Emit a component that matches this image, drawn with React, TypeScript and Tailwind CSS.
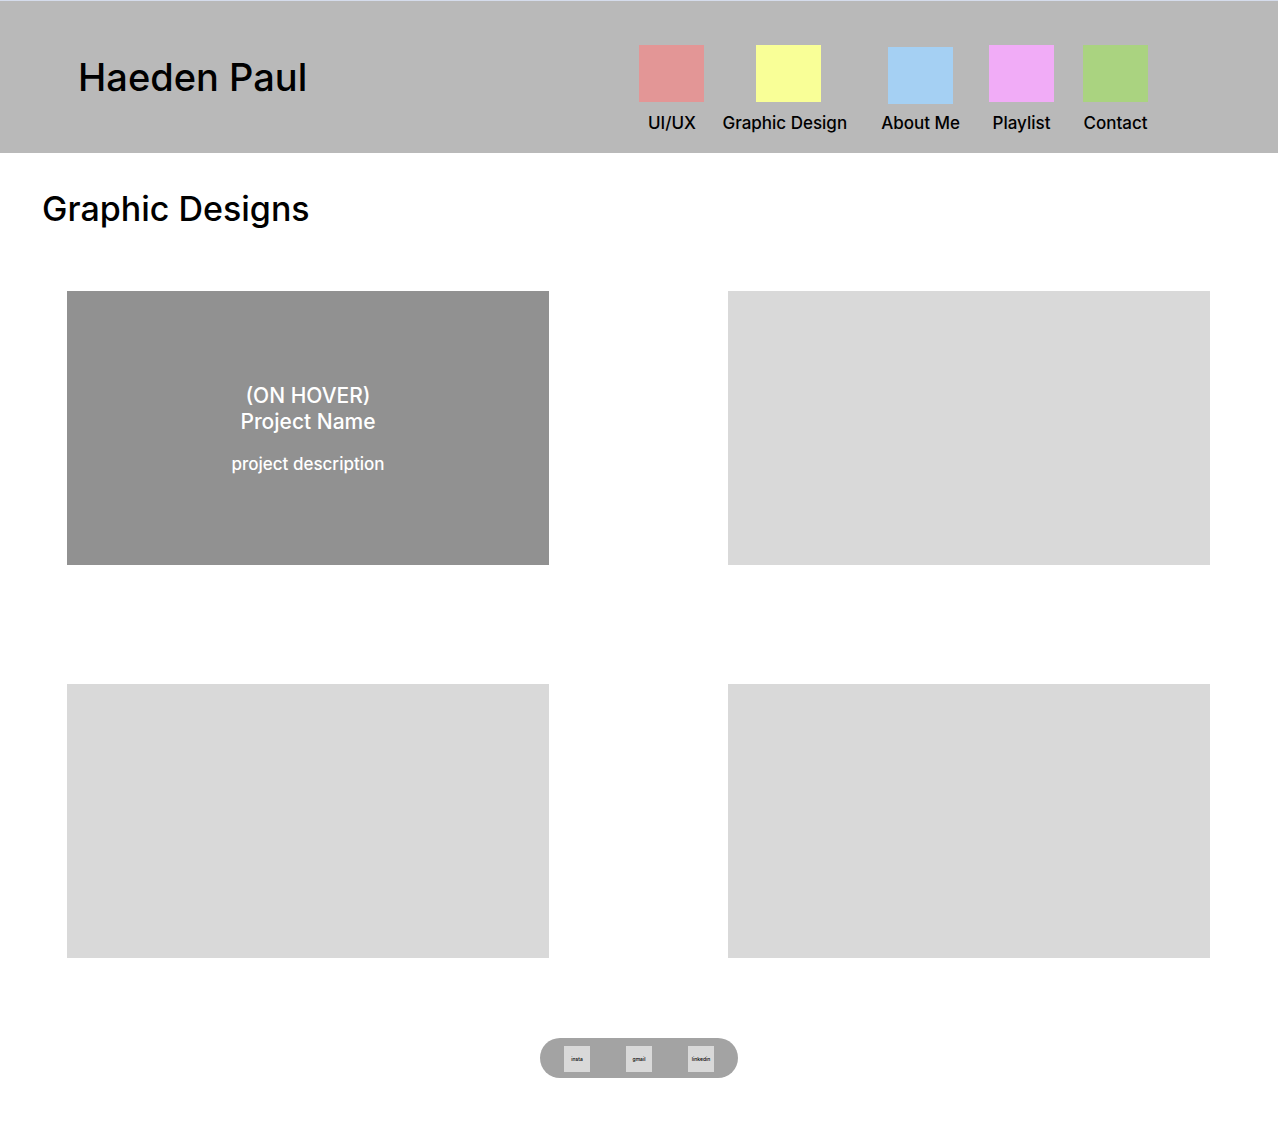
const navItems = [
  { label: "UI/UX", tile: "bg-[#e39696]", spacing: "" },
  { label: "Graphic Design", tile: "ml-[8px] bg-[#f9ff97]", spacing: "ml-[18px]" },
  { label: "About Me", tile: "mt-[2px] -mb-[2px] bg-[#a5d0f3]", spacing: "ml-[34px]" },
  { label: "Playlist", tile: "bg-[#f1acf7]", spacing: "ml-[29px]" },
  { label: "Contact", tile: "bg-[#aad380]", spacing: "ml-[29px]" },
];

const socials = ["insta", "gmail", "linkedin"];

export default function App() {
  return (
    <div className="min-h-screen bg-white font-['Inter',sans-serif] text-black">
      <header className="flex items-start justify-between border-t border-[#d5dcec] bg-[#b9b9b9] pr-[130px] pb-[19px] pl-[78px]">
        <a href="#home" className="mt-[52px] text-[38px] leading-[48px] font-medium">
          Haeden Paul
        </a>
        <nav className="mt-[44px] flex items-start">
          {navItems.map((item) => (
            <a
              key={item.label}
              href="#"
              className={`flex min-w-[65px] flex-col items-center text-[17px] leading-[22px] font-medium whitespace-nowrap ${item.spacing}`}
            >
              <span className={`h-[57px] w-[65px] ${item.tile}`} />
              <span className="mt-[10px]">{item.label}</span>
            </a>
          ))}
        </nav>
      </header>

      <main>
        <h1 className="mt-[34px] ml-[42px] text-[34px] leading-[44px] font-medium">
          Graphic Designs
        </h1>
        <section className="mt-[60px] grid grid-cols-2 gap-x-[179px] gap-y-[119px] pr-[68px] pl-[67px]">
          <article className="flex h-[274px] flex-col items-center justify-center bg-[#919191] pt-[2px] text-center text-white">
            <h2 className="text-[21px] leading-[26px] font-medium">
              (ON HOVER)
              <br />
              Project Name
            </h2>
            <p className="mt-[18px] text-[17px] leading-[22px] font-medium">project description</p>
          </article>
          <article className="h-[274px] bg-[#d9d9d9]" />
          <article className="h-[274px] bg-[#d9d9d9]" />
          <article className="h-[274px] bg-[#d9d9d9]" />
        </section>
      </main>

      <footer className="flex justify-center pt-[80px] pb-[44px]">
        <div className="flex h-[40px] w-[198px] items-center justify-center gap-[36px] rounded-full bg-[#a3a3a3] pt-[2px]">
          {socials.map((name) => (
            <a
              key={name}
              href="#"
              className="flex size-[26px] items-center justify-center bg-[#d9d9d9] text-[5px] leading-[6px] font-medium"
            >
              {name}
            </a>
          ))}
        </div>
      </footer>
    </div>
  );
}
